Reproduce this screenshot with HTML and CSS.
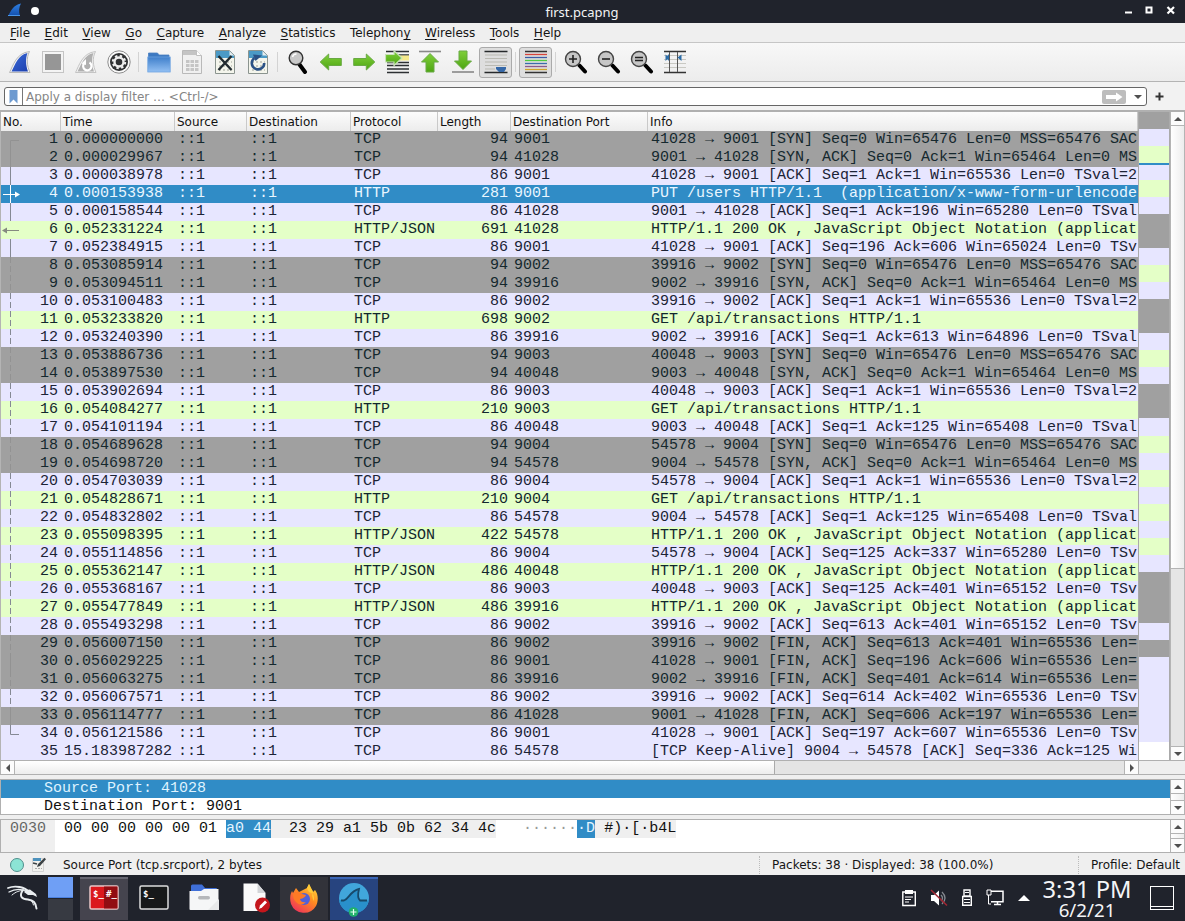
FILE: index.html
```html
<!DOCTYPE html>
<html lang="en">
<head>
<meta charset="utf-8">
<title>first.pcapng</title>
<link rel="stylesheet" href="styles.css">
</head>
<body>
<svg width="0" height="0" class="defs" aria-hidden="true">
  <defs>
    <linearGradient id="fin" x1="0" y1="0" x2="1" y2="1"><stop offset="0" stop-color="#3a6ad8"/><stop offset="1" stop-color="#1c3fae"/></linearGradient>
    <linearGradient id="finTitle" x1="0" y1="0" x2="0" y2="1"><stop offset="0" stop-color="#2f7fe0"/><stop offset="1" stop-color="#134fae"/></linearGradient>
    <linearGradient id="folder" x1="0" y1="0" x2="0" y2="1"><stop offset="0" stop-color="#3f7fcb"/><stop offset="1" stop-color="#93c0f3"/></linearGradient>
    <linearGradient id="leaf" x1="0" y1="0" x2="0" y2="1"><stop offset="0" stop-color="#7fcf3a"/><stop offset="1" stop-color="#4da512"/></linearGradient>
    <linearGradient id="fox" x1="0.9" y1="0" x2="0.2" y2="1"><stop offset="0" stop-color="#ffdf3c"/><stop offset=".45" stop-color="#ff8a22"/><stop offset="1" stop-color="#ee2f5c"/></linearGradient>
    <g id="lens"><path d="M15.500 15.500l5.500 6" stroke="#000" stroke-width="4" stroke-linecap="round"/><circle cx="9" cy="9" r="7.500" fill="#c6c6c6" stroke="#444" stroke-width="1.400"/></g>
    <path id="arrow" d="M1.200 12l8.500-8v4.500h12.600v7H9.700V20z" fill="url(#leaf)" stroke="#69a944" stroke-width="1"/>
    <g id="page"><path d="M2.500 .5h14l5 5v18h-19z" fill="#f4f5ec" stroke="#8b948f"/><path d="M3 1h13.500l4.500 4.500V8H3z" fill="#4b9ac6"/><path d="M16.500 1v4.500H21z" fill="#e8eef0"/><path d="M6 12h13M6 16h13M6 20h13" stroke="#c9cbc2" stroke-width="2" stroke-dasharray="2 2"/></g>
  </defs>
</svg>

<header class="titlebar">
  <svg class="title-fin" width="14" height="14" viewBox="0 0 14 14"><path d="M0 13C3 8 5 2 13 .5C11 4 10.500 8 12 13z" fill="url(#finTitle)"/><path d="M0 12.500h12" stroke="#4a96e8"/></svg>
  <span class="title-dot"></span>
  <span class="title-text">first.pcapng</span>
  <svg class="window-buttons" width="54" height="12" viewBox="0 0 54 12"><path d="M2 7.500h7" stroke="#fff" stroke-width="2"/><rect x="23.500" y="2.500" width="5" height="5" fill="none" stroke="#fff" stroke-width="2"/><path d="M44.500 2l6.500 6.500M51 2l-6.500 6.500" stroke="#fff" stroke-width="2.200"/></svg>
</header>

<nav class="menubar">
  <span><u>F</u>ile</span><span><u>E</u>dit</span><span><u>V</u>iew</span><span><u>G</u>o</span><span><u>C</u>apture</span><span><u>A</u>nalyze</span><span><u>S</u>tatistics</span><span>Telephon<u>y</u></span><span><u>W</u>ireless</span><span><u>T</u>ools</span><span><u>H</u>elp</span>
</nav>

<div class="toolbar">
  <span class="tool"><svg width="24" height="24" viewBox="0 0 24 24"><path d="M1.500 22.500C5 16 8 3 21.500 1.500C18 8 19 16 22 22.500z" fill="#f5f5f5" stroke="#b8b8b8"/><path d="M3.500 21.500C7 15 10 5 19.500 3C17.500 8 17.500 15 20 21.500z" fill="url(#fin)"/></svg></span>
  <span class="tool"><svg width="24" height="24" viewBox="0 0 24 24"><rect x="1.500" y="1.500" width="21" height="21" fill="#f4f4f4" stroke="#c4c4c4"/><rect x="4" y="4" width="16" height="16" fill="#969696"/></svg></span>
  <span class="tool"><svg width="24" height="24" viewBox="0 0 24 24"><path d="M1.500 22.500C5 16 8 3 21.500 1.500C18 8 19 16 22 22.500z" fill="#f5f5f5" stroke="#c4c4c4"/><path d="M3.500 21.500C7 15 10 5 19.500 3C17.500 8 17.500 15 20 21.500z" fill="#b0b0b0"/><path d="M15.500 12.500a4.200 4.200 0 1 1-5.500 1" fill="none" stroke="#fff" stroke-width="2.200"/><path d="M12 9v6l-4.500-1.500z" fill="#fff"/></svg></span>
  <span class="tool"><svg width="24" height="24" viewBox="0 0 24 24"><circle cx="12" cy="12" r="11.200" fill="#fafafa" stroke="#8d8d8d"/><circle cx="12" cy="12" r="9" fill="#2f3133"/><circle cx="12" cy="12" r="4.500" fill="none" stroke="#eee" stroke-width="2.400"/><circle cx="12" cy="12" r="6.200" fill="none" stroke="#eee" stroke-width="2" stroke-dasharray="2.435 2.435"/></svg></span>
  <i class="tool-separator"></i>
  <span class="tool"><svg width="24" height="24" viewBox="0 0 24 24"><path d="M1.500 6V3h9l1.500 2h10v4H1.500z" fill="#3c79c2" stroke="#4b80c0" stroke-width=".8"/><rect x=".8" y="7" width="22.400" height="15" fill="url(#folder)" stroke="#6ea4e2" stroke-width=".8"/></svg></span>
  <span class="tool"><svg width="24" height="24" viewBox="0 0 24 24"><path d="M2.500 .5h14l5 5v18h-19z" fill="#f0f0f0" stroke="#b9b9b9"/><path d="M3 1h13.500v4H3z" fill="#c4c4c4"/><path d="M16.500 .5v5h5" fill="#fff" stroke="#c0c0c0"/><path d="M6 11.500h12.500M6 15.500h12.500M6 19.500h12.500" stroke="#c5c5c5" stroke-width="3" stroke-dasharray="3.500 1"/></svg></span>
  <span class="tool"><svg width="24" height="24" viewBox="0 0 24 24"><use href="#page"/><path d="M5.500 6l13 14M18.500 6l-13 14" stroke="#222b30" stroke-width="2.400"/></svg></span>
  <span class="tool"><svg width="24" height="24" viewBox="0 0 24 24"><use href="#page"/><path d="M8.500 8a6.200 6.200 0 1 0 9.700 5" fill="none" stroke="#2b5286" stroke-width="2.600"/><path d="M7 4.500l9 1-6.500 5.500z" fill="#2b5286"/></svg></span>
  <i class="tool-separator"></i>
  <span class="tool"><svg width="24" height="24" viewBox="0 0 24 24"><path d="M13.500 14.500l5.500 7.500" stroke="#000" stroke-width="4" stroke-linecap="round"/><circle cx="10" cy="8" r="6.800" fill="#c9c9c9" stroke="#333" stroke-width="1.400"/><path d="M6.500 7a4 4 0 0 1 4-3" fill="none" stroke="#fff" stroke-width="1.500"/></svg></span>
  <span class="tool"><svg width="24" height="24" viewBox="0 0 24 24"><use href="#arrow"/></svg></span>
  <span class="tool"><svg width="24" height="24" viewBox="0 0 24 24"><use href="#arrow" transform="translate(24 0) scale(-1 1)"/></svg></span>
  <span class="tool"><svg width="24" height="24" viewBox="0 0 24 24"><path d="M1 1.500h23M1 5h23M2 12.500h22M2 15.500h22M2 19h22M2 22.500h22" stroke="#2d3033" stroke-width="1.400"/><path d="M15 5.500h9v5h-9z" fill="#f5e98a"/><path d="M.5 4.500h8.500V.8l8 7.200-8 7.500V12H.5z" fill="url(#leaf)" stroke="#c8e2b8" stroke-width="1.200"/></svg></span>
  <span class="tool"><svg width="24" height="24" viewBox="0 0 24 24"><path d="M1 1.500h22" stroke="#888" stroke-width="1.600"/><path d="M12 3.500l8.500 8.500h-4.500v10H8V12H3.500z" fill="url(#leaf)" stroke="#69a944"/></svg></span>
  <span class="tool"><svg width="24" height="24" viewBox="0 0 24 24"><path d="M1 22h22" stroke="#888" stroke-width="1.600"/><path d="M12 19.500l8.500-8.500h-4.500V1H8v10H3.500z" fill="url(#leaf)" stroke="#69a944"/></svg></span>
  <span class="tool pressed"><svg width="24" height="24" viewBox="0 0 24 24"><path d="M.5 1.500h23M.5 22.500h23" stroke="#26292b" stroke-width="1.300"/><path d="M1 5h22M1 8.500h22M1 12h22M1 15.500h22M1 19h10" stroke="#b9b9b2"/><path d="M12 17h10v2l-2 3h-5l-3-3z" fill="#3568a8"/></svg></span>
  <i class="tool-separator"></i>
  <span class="tool pressed"><svg width="24" height="24" viewBox="0 0 24 24"><g stroke-width="1.300"><path d="M1 1.500h22M1 22.500h22" stroke="#333"/><path d="M1 4.500h22" stroke="#d7443b"/><path d="M1 7.500h22" stroke="#3d5da5"/><path d="M1 10.500h22" stroke="#50cc42"/><path d="M1 13.500h22" stroke="#3a6dab"/><path d="M1 16.500h22" stroke="#8a5b8d"/><path d="M1 19.500h22" stroke="#d0a529"/></g></svg></span>
  <i class="tool-separator"></i>
  <span class="tool"><svg width="24" height="24" viewBox="0 0 24 24"><use href="#lens"/><path d="M5 9h8M9 5v8" stroke="#222" stroke-width="1.600"/></svg></span>
  <span class="tool"><svg width="24" height="24" viewBox="0 0 24 24"><use href="#lens"/><path d="M5 9h8" stroke="#222" stroke-width="1.600"/></svg></span>
  <span class="tool"><svg width="24" height="24" viewBox="0 0 24 24"><use href="#lens"/><path d="M5 7.500h8M5 10.500h8" stroke="#222" stroke-width="1.400"/></svg></span>
  <span class="tool"><svg width="24" height="24" viewBox="0 0 24 24"><path d="M1 1.500h22M1 22.500h22" stroke="#333" stroke-width="1.300"/><path d="M1 5.500h22M1 9.500h22M1 13.500h22M1 17.500h22" stroke="#c9c9c3"/><path d="M6.500 2v20M14.500 2v20" stroke="#555"/><path d="M2.500 4.500l3.500 3-3.500 3.500zM6 4v7L3 7.500zM18.500 4.500l-4 3 4 3.500z" fill="#2d6da8"/></svg></span>
</div>

<div class="filterbar">
  <div class="filter-field">
    <span class="filter-bookmark"><svg width="9" height="14" viewBox="0 0 9 14"><path d="M.5 0h8v13.500l-4-4-4 4z" fill="#6d9ad0"/></svg></span>
    <span class="filter-placeholder">Apply a display filter … &lt;Ctrl-/&gt;</span>
    <svg class="filter-apply" width="24" height="14" viewBox="0 0 24 14"><rect width="24" height="14" rx="2" fill="#bdbdbd"/><path d="M4 5h10V2.500L20.500 7 14 11.500V9H4z" fill="#fff"/></svg>
    <i class="arrow-glyph down"></i>
  </div>
  <svg class="filter-add" width="9" height="9" viewBox="0 0 9 9"><path d="M.5 4.500h8M4.500 .5v8" stroke="#333" stroke-width="2"/></svg>
</div>

<main class="packet-pane">
  <div class="packet-list">
    <div class="columns column-heads"><span>No.</span><span>Time</span><span>Source</span><span>Destination</span><span>Protocol</span><span>Length</span><span>Destination Port</span><span>Info</span></div>
    <div class="packet-rows" id="rows"></div>
  </div>
  <div class="minimap" id="minimap"></div>
  <div class="vscroll list-scroll"><b><i class="arrow-glyph up"></i></b><span class="thumb"></span><span class="groove"></span><b><i class="arrow-glyph down"></i></b></div>
</main>
<div class="hscroll"><b><i class="arrow-glyph left"></i></b><span class="thumb"></span><span class="groove"></span><b><i class="arrow-glyph right"></i></b><span class="corner"></span></div>

<section class="details-pane">
  <div class="details-tree"><div class="detail selected">Source Port: 41028</div><div class="detail">Destination Port: 9001</div></div>
  <div class="vscroll"><b><i class="arrow-glyph up"></i></b><span class="thumb"></span><b><i class="arrow-glyph down"></i></b></div>
</section>

<section class="bytes-pane">
  <div class="byte-offset">0030</div>
  <div class="byte-dump"><span class="hex-start">00 00 00 00 00 01 </span><span class="marked">a0 44</span><span class="shade">  23 29 a1 5b 0b 62 34 4c</span><span class="ascii"><span class="faint">······</span><span class="marked">·D</span><span class="shade"> #)·[·b4L</span></span></div>
  <div class="vscroll"><b><i class="arrow-glyph up"></i></b><span class="thumb"></span><b><i class="arrow-glyph down"></i></b></div>
</section>

<footer class="statusbar">
  <span class="expert-led"></span>
  <svg class="note-icon" width="15" height="15" viewBox="0 0 15 15"><path d="M.5 1.500h11v13H.5z" fill="#f1f1ee" stroke="#ccc" stroke-width=".8"/><path d="M1 1h8v3H1z" fill="#4d92bd"/><path d="M1 6l4 1" stroke="#3c4245" stroke-width="1.500"/><path d="M5 10l1-3L12.500 .8l1.500 1.400-6 6.800z" fill="#3c4245"/><path d="M3 11.500h7" stroke="#aaa" stroke-dasharray="2 1"/></svg>
  <span class="status-field">Source Port (tcp.srcport), 2 bytes</span>
  <span class="status-packets">Packets: 38 · Displayed: 38 (100.0%)</span>
  <span class="status-profile">Profile: Default</span>
</footer>

<div class="taskbar">
  <span class="launcher"><svg width="32" height="28" viewBox="0 0 32 28"><g fill="none" stroke="#e9edf0" stroke-linecap="round"><path d="M1 4C8 1 18 3 22 8" stroke-width="1.800"/><path d="M2 8C8 4.500 16 4.500 21 8" stroke-width="1.400"/><path d="M5 11C9 7.500 13 6.500 16 6.500" stroke-width="1"/><path d="M16 6C11 13 16 15.500 21 15.500C27 16 29 19 29.500 24.500" stroke-width="2"/><path d="M21 15.500C24 16 26 18 26.500 21" stroke-width="1"/></g><path d="M19 6l4-.5 6 4.500 1 3-4-2h-5l-4-3z" fill="#e9edf0"/></svg></span>
  <span class="pager"><i class="current"></i><i></i></span>
  <span class="task active"><svg width="30" height="26" viewBox="0 0 30 26"><rect x="1" y="1" width="28" height="23" rx="1.500" fill="#db181d" stroke="#e9c6c8" stroke-width="1.500"/><path d="M15 1.500h13.500v22H15z" fill="#910d12"/><text x="4" y="12" class="term">$_</text><text x="17" y="12" class="term">#_</text></svg></span>
  <span class="task"><svg width="30" height="26" viewBox="0 0 30 26"><rect x="1" y="1" width="28" height="23" rx="1.500" fill="#17191a" stroke="#dcdddd" stroke-width="1.500"/><text x="4" y="12" class="term">$_</text></svg></span>
  <span class="task"><svg width="30" height="28" viewBox="0 0 30 28"><path d="M2 12V2q0-1.500 1.500-1.500H13l3 3.500h11q1 0 1 1v7z" fill="#3f6fd8"/><path d="M.5 7H12l3-2h14.500v20q0 1-1 1h-27q-1 0-1-1z" fill="#f5f6f7"/><path d="M30 15v11H19z" fill="#e8e9ea"/><rect x="9" y="12" width="12" height="3.500" rx="1.700" fill="#b5b7ba"/></svg></span>
  <span class="task document"><svg width="28" height="30" viewBox="0 0 28 30"><path d="M.5 .5h14l8 9.500v18H.5z" fill="#fafafa"/><path d="M14.500 .5v9.500h8z" fill="#d3d5d8"/><circle cx="19.500" cy="22" r="7.500" fill="#c4161c"/><path d="M16 26l1-3.500 5-5 2 2-5 5z" fill="#fff"/></svg></span>
  <span class="task running"><svg width="30" height="30" viewBox="0 0 30 30"><path d="M18 5l2-4 2.500 5q1 1 1.500 3l2-2C30 12 29 19 27 23a14 14 0 0 1-25-2C0 14 2 10 3 8l1 2 3-5 3 4z" fill="url(#fox)"/><circle cx="15" cy="16" r="6" fill="#5161d8"/><path d="M4 11q5-4 9 0l4 1q-1 3-6 4 1 4 6 3-5 5-10 0Q4 16 4 11z" fill="#ff7a25"/><path d="M18 5l2-4 4 8q-2 4 1 9 1-8-5-9z" fill="#ffcb38"/></svg></span>
  <span class="task focused"><svg width="30" height="34" viewBox="0 0 30 34"><circle cx="15" cy="15" r="15" fill="#41a6db"/><path d="M0 17h5C10 16 11 8 20 6C19 10 18 15 21 17.500h8.700A15 15 0 0 1 0 17z" fill="#2990cb"/><path d="M2 17.500h3C10 16 11 8 20 6C19 10 18 15 21 17.500h7" fill="none" stroke="#17496b" stroke-width="1.800"/><circle cx="14.500" cy="29" r="4.800" fill="#21b16c"/><path d="M11.500 29h6M14.500 26v6" stroke="#e5fff2" stroke-width="1.200"/></svg></span>
  <span class="tray">
    <svg width="16" height="18" viewBox="0 0 16 18"><path d="M1.800 3h12.500v13.500H1.800z" fill="none" stroke="#fff" stroke-width="1.400"/><path d="M4 1h8v4H4z" fill="#fff"/><path d="M4 8h8M4 10.500h6M4 13h4" stroke="#fff"/></svg>
    <svg width="18" height="18" viewBox="0 0 18 18"><path d="M1 6h3l5-4.500v15L4 12H1z" fill="#fff"/><path d="M11 6q3 3 0 6M12 3q6 6 0 12" fill="none" stroke="#858990" stroke-width="1.300"/><path d="M1 1l16 15.500" stroke="#a32632" stroke-width="1.500"/></svg>
    <svg width="12" height="18" viewBox="0 0 12 18"><path d="M3 1h6v6H3zM1.700 7.500h8.600v8.800H1.700z" fill="none" stroke="#fff" stroke-width="1.400"/><path d="M4 3.500h4M3 10.500h6M3 13.500h6" stroke="#fff" stroke-width="1.200"/></svg>
    <svg width="18" height="18" viewBox="0 0 18 18"><path d="M5 2.200h12v10.500H5M8 15.500h7M11.500 12.500v3" fill="none" stroke="#fff" stroke-width="1.500"/><path d="M1 1h4v5H1zM2.500 6v9H5" fill="none" stroke="#fff"/></svg>
    <svg width="14" height="18" viewBox="0 0 14 18"><path d="M1 12l6-6 6 6z" fill="#fff"/></svg>
  </span>
  <span class="clock"><b>3:31 PM</b><i>6/2/21</i></span>
  <span class="show-desktop"></span>
</div>
<script src="app.js"></script>
</body>
</html>
```
FILE: styles.css
```css
* { box-sizing: border-box; }
body { margin: 0; width: 1185px; height: 921px; overflow: hidden; display: flex; flex-direction: column; background: #efefef; color: #111; font: 12px/18px "DejaVu Sans", sans-serif; }
body > * { flex: none; }
svg { display: block; flex: none; }
.defs { position: absolute; }

.titlebar { height: 23px; background: #20232c; color: #f3f4f5; display: flex; align-items: center; }
.title-fin { margin: -3px 0 0 8px; }
.title-dot { width: 8px; height: 8px; border-radius: 50%; background: #fff; margin: -2px 0 0 9px; }
.title-text { width: 100px; margin-left: 493px; text-align: center; font: 13px/20px "Noto Sans", sans-serif; padding-top: 1px; }
.window-buttons { margin: -1px 8px 0 auto; }

.menubar { height: 20px; border-bottom: 1px solid #c6c6c6; display: flex; gap: 14.5px; padding-left: 10px; line-height: 20px; color: #151515; }
.menubar u { text-underline-offset: 2px; text-decoration-thickness: 1px; }

.toolbar { height: 39px; display: flex; align-items: center; padding-left: 3px; background: linear-gradient(#f8f8f8, #ececec); border-bottom: 1px solid #b4b4b4; }
.tool { width: 33px; height: 31px; display: flex; align-items: center; justify-content: center; flex: none; }
.tool.pressed { border: 1px solid #aaa; border-radius: 3px; background: #dedede; }
.tool-separator { width: 1px; height: 20px; margin: 0 3px; background: #d3d3d3; }

.filterbar { height: 28px; display: flex; align-items: center; padding-left: 4px; background: #f2f2f2; }
.filter-field { width: 1143px; height: 19px; margin-top: 1px; border: 1px solid #666; border-radius: 3px; background: #fff; display: flex; align-items: center; }
.filter-bookmark { width: 18px; height: 17px; border-right: 1px solid #777; display: flex; align-items: center; justify-content: center; }
.filter-placeholder { margin-left: 3px; color: #858585; }
.filter-apply { margin-left: auto; }
.filter-field .arrow-glyph { margin: 0 4px 0 8px; }
.filter-add { margin-left: 8px; }

.arrow-glyph { width: 0; height: 0; border: 0 solid transparent; }
.arrow-glyph.down { border-width: 4px 4px 0; border-top-color: #505050; }
.arrow-glyph.up { border-width: 0 4px 4px; border-bottom-color: #505050; }
.arrow-glyph.left { border-width: 4px 4px 4px 0; border-right-color: #505050; }
.arrow-glyph.right { border-width: 4px 0 4px 4px; border-left-color: #505050; }

.packet-pane { height: 650px; border-top: 2px solid #b0b0b0; display: flex; }
.packet-list { width: 1139px; border-left: 1px solid #b4b4b4; border-right: 1px solid #a9a9a9; overflow: hidden; }
.columns { display: grid; grid-template-columns: 60px 114px 72px 104px 87px 73px 137px 490px; }
.column-heads { height: 19px; line-height: 20px; background: linear-gradient(#fcfcfc, #ececec); }
.column-heads span { padding-left: 2px; border-right: 1px solid #c9c9c9; }
.packet-rows { height: 629px; overflow: hidden; font: 15px/18px "Liberation Mono", monospace; }
.packet { height: 18px; position: relative; white-space: pre; }
.packet span { padding-left: 3px; overflow: hidden; }
.packet span:nth-child(1), .packet span:nth-child(6) { text-align: right; padding: 0 3px 0 0; }
.tcp { background: #e7e6ff; color: #1c2336; }
.gray { background: #a0a0a0; color: #15282e; }
.http { background: #e4ffc7; color: #12272e; }
.current-packet { background: #308cc6; color: #e9f6ff; }
.relation { position: absolute; left: 0; top: 0; }

.minimap { width: 31px; background: #fff; border-right: 1px solid #aaa; }
.vscroll { width: 15px; display: flex; flex-direction: column; border: solid #b4b4b4; border-width: 0 1px; background: #f7f7f7; }
.vscroll b { height: 13px; flex: none; display: flex; align-items: center; justify-content: center; background: #fcfcfc; }
.vscroll .thumb { flex: 1; border: solid #b4b4b4; border-width: 1px 0; background: linear-gradient(90deg, #fff, #ededed); }
.list-scroll .thumb { flex: none; height: 444px; }
.list-scroll .groove { flex: 1; background: #e5e5e5; border-bottom: 1px solid #b4b4b4; }

.hscroll { height: 15px; border: solid #b0b0b0; border-width: 1px 0; display: flex; }
.hscroll b { width: 15px; border: solid #b4b4b4; border-width: 0 1px; display: flex; align-items: center; justify-content: center; background: #fcfcfc; }
.hscroll .thumb { width: 760px; border-right: 1px solid #aaa; background: linear-gradient(#fff, #ededed); }
.hscroll .groove { width: 349px; background: #e4e4e4; }
.corner { flex: 1; background: #efefef; }

.details-pane { height: 36px; margin-top: 4px; display: flex; background: #fff; border: 1px solid #b0b0b0; border-right: 0; font: 15px/18px "Liberation Mono", monospace; }
.details-tree { flex: 1; overflow: hidden; }
.detail { height: 18px; padding-left: 43px; white-space: pre; }
.detail.selected { background: #308cc6; color: #dff3ff; }
.bytes-pane { height: 34px; margin-top: 4px; display: flex; border: 1px solid #b0b0b0; border-right: 0; background: #fff; font: 15px/18px "Liberation Mono", monospace; white-space: pre; }
.byte-offset { width: 54px; padding-left: 9px; background: #efefef; color: #666; }
.byte-dump { flex: 1; padding-left: 9px; display: flex; }
.byte-dump > span, .ascii > span { height: 18px; }
.marked { background: #308cc6; color: #e4f5ff; }
.shade { background: #efefef; }
.ascii { margin-left: 27px; display: flex; }
.faint { color: #999; }

.statusbar { height: 22px; display: flex; align-items: center; color: #151515; }
.statusbar > * { margin-top: 1px; }
.expert-led { width: 14px; height: 14px; margin-left: 10px; border: 1px solid #4f8f8c; border-radius: 50%; background: #8ce4d5; }
.note-icon { margin-left: 8px; }
.status-field { margin-left: 16px; }
.status-packets { margin-left: auto; width: 319px; border-left: 1px dotted #bbb; padding-left: 12px; }
.status-profile { width: 107px; border-left: 1px dotted #bbb; padding-left: 12px; white-space: nowrap; }

.taskbar { height: 46px; background: #20232c; display: flex; align-items: center; }
.launcher { width: 48px; padding-left: 7px; }
.pager { width: 25px; height: 43px; display: flex; flex-direction: column; gap: 1px; margin-right: 7px; }
.pager i { flex: 1; background: #373a42; }
.pager .current { background: #6f9ff5; border-bottom: 1px solid #4a80e0; }
.task { width: 48px; height: 43px; margin-right: 2px; display: flex; align-items: center; justify-content: center; }
.task.active { background: #45444e; border-top: 2px solid #666671; padding-bottom: 2px; }
.task.document { padding-left: 5px; }
.task.running { background: #32333a; }
.task.focused { background: #27447f; border-top: 2px solid #3a65b6; padding-top: 2px; }
.term { font: bold 9px "DejaVu Sans Mono", monospace; fill: #fff; }
.tray { margin-left: auto; display: flex; align-items: center; gap: 13px; }
.clock { width: 102px; margin-left: 5px; text-align: center; color: #f4f5f7; font-family: "Noto Sans", sans-serif; display: flex; flex-direction: column; }
.clock b { font-weight: 400; font-size: 23.7px; line-height: 23px; }
.clock i { font-style: normal; font-size: 18.700px; line-height: 18px; }
.show-desktop { width: 24px; height: 24px; margin: 0 11px 0 12px; border: 1px solid #fff; box-shadow: inset 0 -2px #20232c, inset 0 -3px #fff; }
```
FILE: app.js
```js
// kind: g = handshake or teardown, t = plain TCP, h = HTTP, s = selected
const syn = 'Seq=0 Win=65476 Len=0 MSS=65476 SAC';
const packets = [
  ['g', '0.000000000', 'TCP', 94, 9001, '41028 → 9001 [SYN] ' + syn],
  ['g', '0.000029967', 'TCP', 94, 41028, '9001 → 41028 [SYN, ACK] Seq=0 Ack=1 Win=65464 Len=0 MS'],
  ['t', '0.000038978', 'TCP', 86, 9001, '41028 → 9001 [ACK] Seq=1 Ack=1 Win=65536 Len=0 TSval=2'],
  ['s', '0.000153938', 'HTTP', 281, 9001, 'PUT /users HTTP/1.1  (application/x-www-form-urlencode'],
  ['t', '0.000158544', 'TCP', 86, 41028, '9001 → 41028 [ACK] Seq=1 Ack=196 Win=65280 Len=0 TSval'],
  ['h', '0.052331224', 'HTTP/JSON', 691, 41028, 'HTTP/1.1 200 OK , JavaScript Object Notation (applicat'],
  ['t', '0.052384915', 'TCP', 86, 9001, '41028 → 9001 [ACK] Seq=196 Ack=606 Win=65024 Len=0 TSv'],
  ['g', '0.053085914', 'TCP', 94, 9002, '39916 → 9002 [SYN] ' + syn],
  ['g', '0.053094511', 'TCP', 94, 39916, '9002 → 39916 [SYN, ACK] Seq=0 Ack=1 Win=65464 Len=0 MS'],
  ['t', '0.053100483', 'TCP', 86, 9002, '39916 → 9002 [ACK] Seq=1 Ack=1 Win=65536 Len=0 TSval=2'],
  ['h', '0.053233820', 'HTTP', 698, 9002, 'GET /api/transactions HTTP/1.1'],
  ['t', '0.053240390', 'TCP', 86, 39916, '9002 → 39916 [ACK] Seq=1 Ack=613 Win=64896 Len=0 TSval'],
  ['g', '0.053886736', 'TCP', 94, 9003, '40048 → 9003 [SYN] ' + syn],
  ['g', '0.053897530', 'TCP', 94, 40048, '9003 → 40048 [SYN, ACK] Seq=0 Ack=1 Win=65464 Len=0 MS'],
  ['t', '0.053902694', 'TCP', 86, 9003, '40048 → 9003 [ACK] Seq=1 Ack=1 Win=65536 Len=0 TSval=2'],
  ['h', '0.054084277', 'HTTP', 210, 9003, 'GET /api/transactions HTTP/1.1'],
  ['t', '0.054101194', 'TCP', 86, 40048, '9003 → 40048 [ACK] Seq=1 Ack=125 Win=65408 Len=0 TSval'],
  ['g', '0.054689628', 'TCP', 94, 9004, '54578 → 9004 [SYN] ' + syn],
  ['g', '0.054698720', 'TCP', 94, 54578, '9004 → 54578 [SYN, ACK] Seq=0 Ack=1 Win=65464 Len=0 MS'],
  ['t', '0.054703039', 'TCP', 86, 9004, '54578 → 9004 [ACK] Seq=1 Ack=1 Win=65536 Len=0 TSval=2'],
  ['h', '0.054828671', 'HTTP', 210, 9004, 'GET /api/transactions HTTP/1.1'],
  ['t', '0.054832802', 'TCP', 86, 54578, '9004 → 54578 [ACK] Seq=1 Ack=125 Win=65408 Len=0 TSval'],
  ['h', '0.055098395', 'HTTP/JSON', 422, 54578, 'HTTP/1.1 200 OK , JavaScript Object Notation (applicat'],
  ['t', '0.055114856', 'TCP', 86, 9004, '54578 → 9004 [ACK] Seq=125 Ack=337 Win=65280 Len=0 TSv'],
  ['h', '0.055362147', 'HTTP/JSON', 486, 40048, 'HTTP/1.1 200 OK , JavaScript Object Notation (applicat'],
  ['t', '0.055368167', 'TCP', 86, 9003, '40048 → 9003 [ACK] Seq=125 Ack=401 Win=65152 Len=0 TSv'],
  ['h', '0.055477849', 'HTTP/JSON', 486, 39916, 'HTTP/1.1 200 OK , JavaScript Object Notation (applicat'],
  ['t', '0.055493298', 'TCP', 86, 9002, '39916 → 9002 [ACK] Seq=613 Ack=401 Win=65152 Len=0 TSv'],
  ['g', '0.056007150', 'TCP', 86, 9002, '39916 → 9002 [FIN, ACK] Seq=613 Ack=401 Win=65536 Len='],
  ['g', '0.056029225', 'TCP', 86, 9001, '41028 → 9001 [FIN, ACK] Seq=196 Ack=606 Win=65536 Len='],
  ['g', '0.056063275', 'TCP', 86, 39916, '9002 → 39916 [FIN, ACK] Seq=401 Ack=614 Win=65536 Len='],
  ['t', '0.056067571', 'TCP', 86, 9002, '39916 → 9002 [ACK] Seq=614 Ack=402 Win=65536 Len=0 TSv'],
  ['g', '0.056114777', 'TCP', 86, 41028, '9001 → 41028 [FIN, ACK] Seq=606 Ack=197 Win=65536 Len='],
  ['t', '0.056121586', 'TCP', 86, 9001, '41028 → 9001 [ACK] Seq=197 Ack=607 Win=65536 Len=0 TSv'],
  ['t', '15.183987282', 'TCP', 86, 54578, '[TCP Keep-Alive] 9004 → 54578 [ACK] Seq=336 Ack=125 Wi'],
];
const kinds = { g: 'gray', t: 'tcp', h: 'http', s: 'current-packet' };

// Conversation line drawn in the gutter of the first column
function relation(n, kind) {
  if (n > 34) return '';
  const color = kind === 's' ? '#fff' : kind === 'g' ? '#929292' : '#858994';
  let d = 'M9.500 0V18';
  if (n === 1) d = 'M18 9.500H9.500V18';
  if (n === 34) d = 'M9.500 0V9.500H18';
  const dash = n > 7 && n < 34 && n !== 30 && n !== 33 ? ' stroke-dasharray="6 3"' : '';
  let extra = '';
  if (n === 4) extra = '<path d="M2 9.500h14" stroke="#fff"/><path d="M14 6.500l5 3-5 3z" fill="#fff"/>';
  if (n === 6) extra = '<path d="M5 9.500h13" stroke="#858a80"/><path d="M6 6.500l-5 3 5 3z" fill="#858a80"/>';
  const line = n === 6 ? '' : `<path d="${d}" fill="none" stroke="${color}"${dash}/>`;
  return `<svg class="relation" width="22" height="18">${line}${extra}</svg>`;
}

document.getElementById('rows').innerHTML = packets.map(([kind, time, proto, len, port, info], i) => {
  const cells = [i + 1, time, '::1', '::1', proto, len, port, info];
  return `<div class="packet columns ${kinds[kind]}">${cells.map(c => `<span>${c}</span>`).join('')}${relation(i + 1, kind)}</div>`;
}).join('');

// Overview bands: [kind, height]
const bands = [['g', 17], ['t', 17], ['h', 17], ['s', 2], ['t', 15], ['h', 17], ['t', 17], ['g', 34], ['t', 17], ['h', 17], ['t', 17], ['g', 34], ['t', 17], ['h', 17], ['t', 17], ['g', 34], ['t', 18], ['h', 17], ['t', 17], ['h', 17], ['t', 17], ['h', 17], ['t', 17], ['h', 17], ['t', 17], ['g', 51], ['t', 17], ['g', 17], ['t', 85]];
document.getElementById('minimap').innerHTML = bands.map(([k, h]) => `<div class="${kinds[k]}" style="height:${h}px"></div>`).join('');
```
